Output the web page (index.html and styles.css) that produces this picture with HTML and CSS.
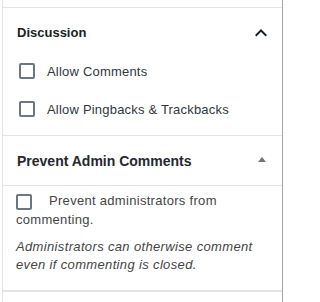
FILE: index.html
```html
<!DOCTYPE html>
<html>
<head>
<meta charset="utf-8">
<link rel="stylesheet" href="styles.css">
</head>
<body>
<div class="sidebar">
  <div class="spacer"></div>
  <section class="panel">
    <div class="panel-header">
      <span class="panel-title">Discussion</span>
      <svg class="chevron" width="24" height="24" viewBox="0 0 24 24"><path d="M12 8l-6 6 1.41 1.41L12 10.83l4.59 4.58L18 14z" fill="#191e23"/></svg>
    </div>
    <div class="panel-body">
      <div class="check-row"><span class="checkbox"></span><span class="check-label">Allow Comments</span></div>
      <div class="check-row"><span class="checkbox"></span><span class="check-label">Allow Pingbacks &amp; Trackbacks</span></div>
    </div>
  </section>
  <section class="metabox">
    <div class="metabox-header">
      <h2 class="metabox-title">Prevent Admin Comments</h2>
      <span class="triangle"></span>
    </div>
    <div class="metabox-inside">
      <label class="meta-label"><span class="checkbox inline"></span>Prevent administrators from commenting.</label>
      <p class="meta-note">Administrators can otherwise comment even if commenting is closed.</p>
    </div>
  </section>
</div>
</body>
</html>
```

FILE: styles.css
```css
html, body {
  margin: 0;
  padding: 0;
  background: #fff;
  overflow: hidden;
}
body {
  font-family: "Liberation Sans", Arial, sans-serif;
  font-size: 13px;
}
.sidebar {
  box-sizing: border-box;
  margin-left: 2px;
  width: 281px;
  height: 302px;
  border-left: 1px solid #e2e4e7;
  border-right: 1px solid #a4a7aa;
}
.spacer {
  height: 7px;
}
.panel {
  border-top: 1px solid #e2e4e7;
  border-bottom: 1px solid #e2e4e7;
}
.panel-header {
  height: 49px;
  display: flex;
  align-items: center;
  justify-content: space-between;
  padding-left: 14px;
  padding-right: 9px;
}
.panel-title {
  font-weight: 700;
  font-size: 13px;
  color: #191e23;
}
.chevron {
  display: block;
}
.panel-body {
  padding: 2px 0 14px 16px;
  display: flex;
  flex-direction: column;
  gap: 14px;
}
.check-row {
  height: 24px;
  display: flex;
  align-items: center;
}
.checkbox {
  box-sizing: border-box;
  width: 16px;
  height: 16px;
  border: 2px solid #6c7781;
  border-radius: 2px;
  margin-right: 12px;
  flex: none;
}
.check-label {
  color: #32373c;
  letter-spacing: 0.2px;
}
.metabox {
  border-bottom: 2px solid #e2e4e7;
}
.metabox-header {
  height: 49px;
  display: flex;
  align-items: center;
  justify-content: space-between;
  padding-left: 14px;
  padding-right: 16px;
  border-bottom: 1px solid #e2e4e7;
}
.metabox-title {
  margin: 0;
  font-size: 14px;
  font-weight: 700;
  color: #23282d;
}
.triangle {
  width: 0;
  height: 0;
  border-left: 4px solid transparent;
  border-right: 4px solid transparent;
  border-bottom: 5px solid #72777c;
  margin-top: -3px;
}
.metabox-inside {
  padding: 5px 12px 16px 13px;
  color: #444;
}
.meta-label {
  display: block;
  line-height: 19px;
  letter-spacing: 0.3px;
}
.checkbox.inline {
  display: inline-block;
  vertical-align: -5px;
  margin-right: 17px;
}
.meta-note {
  margin: 9px 0 0;
  font-style: italic;
  line-height: 18px;
  letter-spacing: 0.35px;
}
```
